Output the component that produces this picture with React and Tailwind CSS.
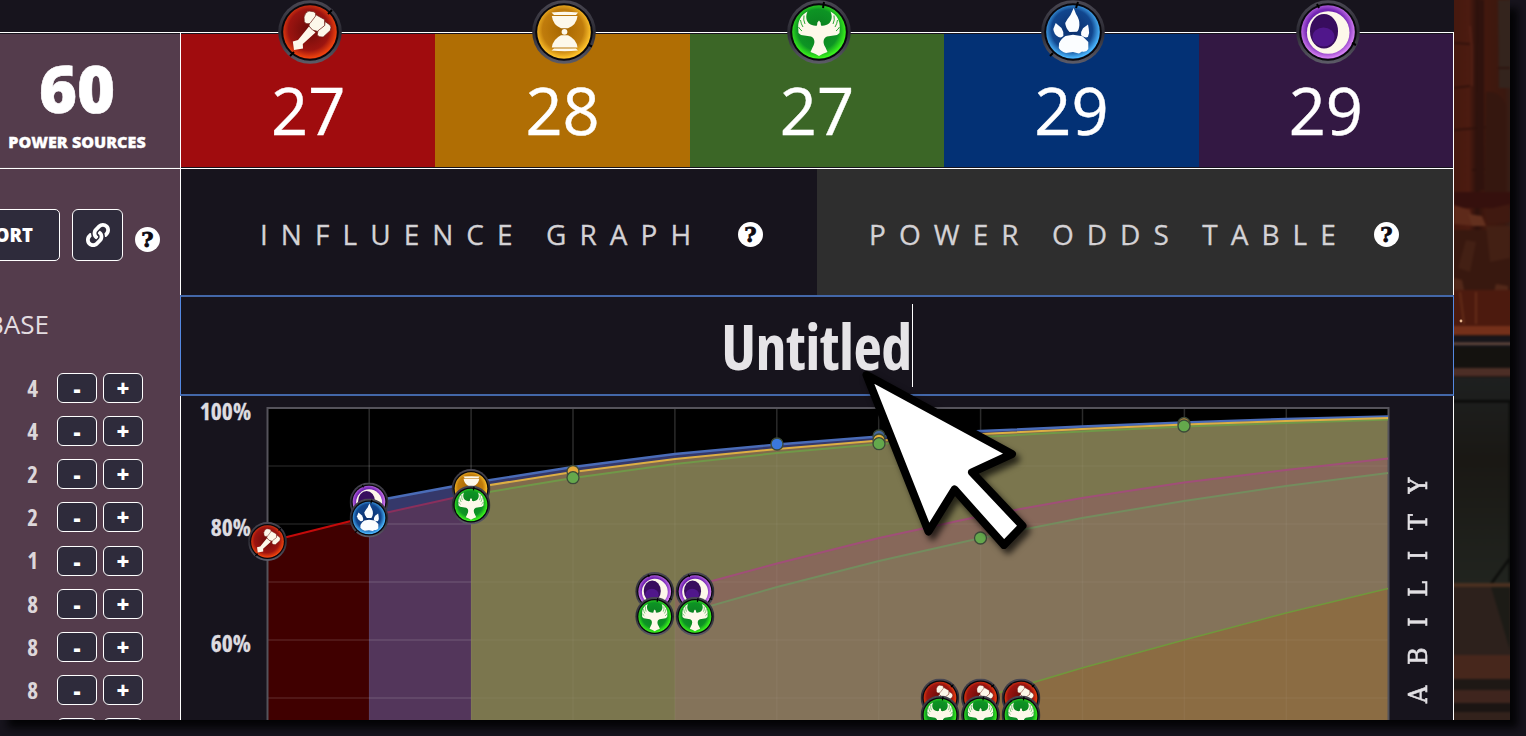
import React from "react";
import { FaLink } from "react-icons/fa";

const CREAM = "#fdf8ea";

function GemDefs() {
  const stops = {
    red: ["#6a0c0a", "#9c1410", "#f0440e"],
    gold: ["#a66600", "#c07c0c", "#ffc42c"],
    green: ["#0b7d20", "#0d9424", "#3cf41c"],
    blue: ["#0b2e6b", "#11468e", "#4cb8ff"],
    purple: ["#3c0a7a", "#7426b4", "#d884f4"],
  };
  return (
    <svg className="absolute h-0 w-0" aria-hidden="true">
      <defs>
        {Object.entries(stops).map(([k, [a, b, c]]) => (
          <radialGradient key={k} id={`gem-${k}`} cx="0.48" cy="0.46" r="0.56">
            <stop offset="0" stopColor={a} />
            <stop offset="0.68" stopColor={b} />
            <stop offset="0.94" stopColor={c} />
            <stop offset="1" stopColor={b} />
          </radialGradient>
        ))}
        <linearGradient id="gem-rim" x1="0" y1="0" x2="0" y2="1">
          <stop offset="0" stopColor="#4a4853" />
          <stop offset="0.5" stopColor="#2b2a33" />
          <stop offset="1" stopColor="#5d5c68" />
        </linearGradient>
      </defs>
    </svg>
  );
}

function Hammer() {
  return (
    <g>
      <path fill={CREAM} d="M31 26.5L37.500 32.500L24.800 44L25 48.500L16 50L14.800 41.500L20 40Z" />
      <g fill={CREAM} stroke="#6a1a14" strokeWidth="0.7">
        <path d="M31.500 22.500L37.500 14.500L46.500 19.500L47 25.500L40 31.500L34.500 30L31 26Z" />
        <path d="M26 17Q27.500 11.600 31 11L36 11.800Q38.300 13 37.600 16L32 23.400Q27.600 24.600 26.300 21.700Z" />
        <path d="M47 21.500L52 25Q53.800 26.800 52.300 30.500L45.200 37Q41 37.600 39.200 35L40 30.800L46.700 25.500Z" />
      </g>
    </g>
  );
}

function Hourglass() {
  return (
    <g fill={CREAM}>
      <path d="M19.5 12.5Q32.5 11 46 12.5L44 15H22Z" />
      <path d="M19.8 16H45.5Q44.5 25 36 28.3H29Q21 25 19.8 16Z" />
      <circle cx="32.5" cy="31.8" r="2.9" />
      <path d="M29 35.2H36Q44.5 39 45.5 47.5H19.8Q21 39 29 35.2Z" />
      <path d="M22 48.4H44L46 50.6Q32.5 52 19.5 50.6Z" />
    </g>
  );
}

function Phoenix() {
  return (
    <g>
      <path
        fill={CREAM}
        d="M20.5 11.5C14 15 11 21 11.2 27L11.5 33L14 35L24 36.500C28 38 28.5 43 25.5 47.5L23.5 52L28.5 54L32 56L35.5 54L40.5 52L38.5 47.5C35.5 43 36 38 40 36.500L50 35L52.5 33L52.8 27C53 21 50 15 43.5 11.5C45.5 16 45 20 42.5 23C40 25.500 36 26 34 25.5L33.6 22.5L32 20.5L30.4 22.5L30 25.5C28 26 24 25.500 21.5 23C19 20 18.5 16 20.5 11.5Z"
      />
      <path
        fill="none"
        stroke="#14a020"
        strokeWidth="0.9"
        d="M17 15.500Q16 20 18 24M13.500 20Q14 24 16 27M11.500 27Q12.500 29 15 31M47 15.500Q48 20 46 24M50.500 20Q50 24 48 27M52.500 27Q51.500 29 49 31"
      />
    </g>
  );
}

function Paw() {
  return (
    <g fill="#fbfdff">
      <path d="M32.700 8L35 14Q38.900 20 38.400 25Q38 30 36 31.800L28.500 32Q24.600 28 24.200 23Q27 18 29.500 15Z" />
      <path d="M14.700 23L20.500 28Q23 32 22.400 35.700Q20.500 38.300 17.500 37Q12.600 34 12.300 29Z" />
      <path d="M47 24.500L42 28.300Q39.400 32 40.100 35.300Q43.800 38.300 46.900 37Q48.900 33 47.800 29Z" />
      <path d="M18 43.500Q20 38.500 24.500 36L32 34.800L41.500 36.200L47.300 42V49Q45.500 52.500 41 51.500L38 53.500L32 52L25 53Q20 51.500 17.800 48Z" />
    </g>
  );
}

function Moon() {
  return (
    <g>
      <circle cx="32.200" cy="32.500" r="21.300" fill={CREAM} />
      <ellipse cx="28" cy="31.300" rx="14" ry="17.300" fill="#380d5e" />
      <ellipse cx="27.500" cy="37" rx="11" ry="9.500" fill="#6420b0" opacity="0.55" />
    </g>
  );
}

const GLYPHS = { red: Hammer, gold: Hourglass, green: Phoenix, blue: Paw, purple: Moon };
const NOTCHES = {
  red: "M50 14L54 10M16 52L12 56",
  gold: "M57 45L60 46.500",
  green: "M37 2L36 8",
  blue: "M37 2L35 8M12 53L9 56",
  purple: "M21 4L23 8M56 43L60 45",
};

function Gem({ kind, size = 64, x = 0, y = 0, className }) {
  const Glyph = GLYPHS[kind];
  return (
    <svg x={x} y={y} width={size} height={size} viewBox="0 0 64 64" className={className}>
      <circle cx="32" cy="32" r="31.800" fill="url(#gem-rim)" />
      <circle cx="32" cy="32" r="28.800" fill="#08070c" />
      <circle cx="32" cy="32" r="26.800" fill={`url(#gem-${kind})`} />
      <path d={NOTCHES[kind]} stroke="#000" strokeWidth="2" />
      <Glyph />
    </svg>
  );
}

function Help() {
  return (
    <span className="flex h-[25px] w-[25px] shrink-0 items-center justify-center rounded-full bg-white font-['DejaVu_Serif',serif] text-[21px] leading-[25px] font-bold tracking-normal text-[#0c0a10] [-webkit-text-stroke:0.8px_#0c0a10]">
      ?
    </span>
  );
}

const POWERS = [
  { kind: "red", value: 27, bg: "bg-[#a00c0e]" },
  { kind: "gold", value: 28, bg: "bg-[#b06e04]" },
  { kind: "green", value: 27, bg: "bg-[#3b6626]" },
  { kind: "blue", value: 29, bg: "bg-[#033175]" },
  { kind: "purple", value: 29, bg: "bg-[#331843]" },
];

function Stepper({ value }) {
  const btn =
    "flex h-[30px] w-10 items-center justify-center rounded-[6px] border border-white bg-[#2e2b3b] text-[22px] leading-none font-extrabold text-white";
  return (
    <div className="flex h-[43.150px] shrink-0 items-center">
      <span className="mr-[19px] w-[38px] text-right text-[23px] font-bold text-[#ddd7da] [font-stretch:75%]">{value}</span>
      <button className={btn}>-</button>
      <button className={`${btn} ml-1.5`}>+</button>
    </div>
  );
}

function Sidebar() {
  return (
    <aside className="flex w-[180px] shrink-0 flex-col overflow-hidden">
      <div className="flex h-[133px] flex-col items-center bg-[#543c4c] pr-[26px] pt-[24px] font-extrabold text-white">
        <span className="text-[65px] leading-[60px] [-webkit-text-stroke:0.6px_#fff]">60</span>
        <span className="mt-[12px] text-[16.100px] leading-6 whitespace-nowrap [-webkit-text-stroke:0.3px_#fff]">POWER SOURCES</span>
      </div>
      <div className="h-px bg-[#5a4652]" />
      <div className="h-px bg-white" />
      <div className="flex h-[551px] flex-col bg-[#543c4c] pt-10">
        <div className="flex h-[52px] shrink-0 items-center justify-end pr-5">
          <button className="flex h-[52px] w-[112px] shrink-0 items-center justify-end rounded-[5px] border border-white bg-[#2e2b3b] pr-[26px] text-[18.500px] font-extrabold text-white">
            EXPORT
          </button>
          <button className="ml-3 flex h-[52px] w-[51px] shrink-0 items-center justify-center rounded-[6px] border border-white bg-[#2e2b3b] text-white">
            <FaLink size={24} />
          </button>
          <span className="mt-2 ml-3">
            <Help />
          </span>
        </div>
        <div className="mt-[44px] flex h-[38px] w-[49px] shrink-0 items-center justify-end text-[26px] text-[#e3dde1]">BASE</div>
        <div className="mt-[23.500px] flex flex-col">
          {[4, 4, 2, 2, 1, 8, 8, 8, 8].map((n, i) => (
            <Stepper key={i} value={n} />
          ))}
        </div>
      </div>
    </aside>
  );
}

const BLUE = [[369, 502], [471, 483], [573, 467], [675, 454], [777, 444.500], [879, 436.500], [981, 431], [1082, 426.500], [1184, 422.500], [1286, 419], [1388, 416.500]];
const GOLD = [[471, 488], [573, 472], [675, 459], [777, 449], [879, 440.500], [981, 434], [1082, 429], [1184, 424.500], [1286, 421], [1388, 418]];
const GREEN = [[471, 495], [573, 478], [675, 464], [777, 453], [879, 444], [981, 437], [1082, 431.500], [1184, 426.500], [1286, 423], [1388, 419.500]];
const RED = [[267, 542], [369, 516.500], [471, 494]];
const PINK = [[675, 591], [777, 563.500], [879, 538], [981, 516], [1082, 498], [1184, 482.500], [1286, 470], [1388, 458.500]];
const SAGE = [[675, 616], [777, 587], [879, 561], [981, 538], [1082, 518], [1184, 501], [1286, 486], [1388, 473]];
const LIME = [[981, 698], [1082, 668], [1184, 640], [1286, 613], [1388, 588.500]];

const pts = (a) => a.map((p) => p.join(",")).join(" ");
const area = (a) => `${a[0][0]},720 ${pts(a)} ${a[a.length - 1][0]},720`;

const DOTS = [
  [573, 471.500, "#e2a83a"], [573, 477.700, "#64a84c"],
  [777, 444, "#3a78dc"],
  [879, 436, "#4468a0"], [879, 440, "#e2b03a"], [879, 443.700, "#64a84c"],
  [980.500, 538, "#64a84c"],
  [1184, 423.500, "#c08a3a"], [1184, 426, "#64a84c"],
];
const GEMS = [
  ["red", 267.500, 541.500],
  ["purple", 369, 502], ["blue", 369, 518],
  ["gold", 471, 488.500], ["green", 471, 505],
  ["purple", 654.700, 591.500], ["purple", 695, 591.500], ["green", 654.700, 616.500], ["green", 695, 616.500],
  ["red", 940, 698], ["red", 980.500, 698], ["red", 1021, 698],
  ["green", 940, 715], ["green", 980.500, 715], ["green", 1021, 715],
];

function Chart() {
  return (
    <svg className="block shrink-0 overflow-visible" width="1123" height="324" viewBox="267 396 1123 324">
      <rect x="267" y="408" width="1121" height="312" fill="#000" />
      <polygon points={area(BLUE)} fill="#35386a" />
      <polygon points={area(GOLD)} fill="#806a4c" />
      <polygon points={area(RED.slice(0, 2))} fill="#400000" />
      <polygon points={area(RED.slice(1))} fill="#53365b" />
      <polygon points={area(GREEN)} fill="#7b764e" />
      <polygon points={area(PINK)} fill="#87685a" />
      <polygon points={area(SAGE)} fill="#84735a" />
      <polygon points={area(LIME)} fill="#8b6c43" />
      <g stroke="#fff" strokeWidth="1.500">
        {[1, 2, 3, 4, 5, 6, 7, 8, 9, 10].map((i) => (
          <g key={i}>
            <line x1={267.300 + i * 101.900} x2={267.300 + i * 101.900} y1="408" y2={BLUE[i - 1][1]} strokeOpacity="0.17" />
            <line x1={267.300 + i * 101.900} x2={267.300 + i * 101.900} y1={BLUE[i - 1][1]} y2="720" strokeOpacity="0.04" />
          </g>
        ))}
        {[466, 524, 582, 640, 698].map((y) => (
          <g key={y}>
            <line x1="268" x2="471" y1={y} y2={y} strokeOpacity="0.12" />
            <line x1="471" x2="1388" y1={y} y2={y} strokeOpacity="0.04" />
          </g>
        ))}
        <line x1="471" x2="573" y1="466" y2="466" strokeOpacity="0.08" />
      </g>
      <path d="M267.500 720V408H1388.500V720" fill="none" stroke="#55535b" strokeWidth="2" />
      <g fill="none" strokeWidth="2">
        <polyline points={pts(RED.slice(0, 2))} stroke="#c40a0a" />
        <polyline points={pts(RED.slice(1))} stroke="#8a2f5c" />
        <polyline points={pts(BLUE)} stroke="#4a6cb8" strokeWidth="2.400" />
        <polyline points={pts(GREEN)} stroke="#709848" />
        <polyline points={pts(GOLD)} stroke="#dcae44" />
        <polyline points={pts(PINK)} stroke="#a04f78" />
        <polyline points={pts(SAGE)} stroke="#748c5e" />
        <polyline points={pts(LIME)} stroke="#70983c" strokeWidth="1.500" />
      </g>
      {DOTS.map(([x, y, c], i) => (
        <circle key={i} cx={x} cy={y} r="6" fill={c} stroke="#3c4a38" strokeWidth="1.300" />
      ))}
      {GEMS.map(([k, x, y], i) => (
        <Gem key={i} kind={k} size={39} x={x - 19.500} y={y - 19.500} />
      ))}
    </svg>
  );
}

function Backdrop() {
  return (
    <svg className="block h-[720px] w-14 shrink-0" viewBox="0 0 56 720">
      <defs>
        <linearGradient id="wall" x1="0" x2="1" y1="0" y2="0">
          <stop offset="0" stopColor="#44180f" />
          <stop offset="0.3" stopColor="#4c1b10" />
          <stop offset="0.42" stopColor="#2c110c" />
          <stop offset="0.55" stopColor="#42180e" />
          <stop offset="0.85" stopColor="#3a180f" />
          <stop offset="1" stopColor="#33211b" />
        </linearGradient>
        <linearGradient id="slab" x1="0" x2="0" y1="0" y2="1">
          <stop offset="0" stopColor="#1e2020" />
          <stop offset="0.4" stopColor="#1a1814" />
          <stop offset="1" stopColor="#21241f" />
        </linearGradient>
        <filter id="soft" x="-10%" y="-5%" width="120%" height="110%" colorInterpolationFilters="sRGB">
          <feGaussianBlur stdDeviation="1" />
        </filter>
      </defs>
      <rect width="56" height="720" fill="#2a1510" />
      <g filter="url(#soft)">
        <rect x="-4" y="-4" width="64" height="330" fill="url(#wall)" />
        <path d="M44 0H60V88H45Z" fill="#34241d" />
        <path d="M0 43L16 44M0 88L16 86M0 130L48 126M18 170L50 168M44 68H56" stroke="#2c100b" strokeWidth="1.500" />
        <path d="M32 92Q46 90 52 106V196H30Z" fill="#35170f" />
        <path d="M16 26L18 48V86" fill="none" stroke="#5a2418" strokeWidth="1.500" />
        <path d="M24 0H30V190H22Z" fill="#2f120d" />
        <path d="M0 192H60V208H0Z" fill="#35100d" />
        <path d="M0 205L16 210L20 226L0 224Z" fill="#5e2a1a" />
        <path d="M14 214L28 216L32 226L18 226Z" fill="#63301e" />
        <path d="M30 210L56 204V222L34 224Z" fill="#401910" />
        <path d="M-4 230H60V290H-4Z" fill="#38180f" />
        <path d="M12 240L22 242L16 272L4 268ZM32 226H56V258L36 262Z" fill="#432014" />
        <path d="M0 278L8 280L12 300H0ZM42 284L54 286V292H40Z" fill="#522819" />
        <rect x="-4" y="290" width="64" height="36" fill="#4c1a0e" />
        <path d="M6 292L10 324M22 292V324" stroke="#642c18" strokeWidth="2" />
        <rect x="-4" y="326" width="64" height="9" fill="#74301a" />
        <rect x="-4" y="336" width="64" height="11" fill="#17151a" />
        <rect x="-4" y="342.500" width="64" height="2.500" fill="#64483e" />
        <rect x="-4" y="347" width="64" height="21" fill="#14120f" />
        <rect x="-4" y="368" width="64" height="8" fill="#4c2e26" />
        <rect x="-4" y="377" width="64" height="207" fill="url(#slab)" />
        <rect x="-4" y="400" width="64" height="2.500" fill="#090a09" />
        <path d="M56 402V582M56 558L37 584" stroke="#0b0c0a" strokeWidth="2.500" />
        <rect x="-4" y="583" width="64" height="4" fill="#4a3020" />
        <rect x="-4" y="587" width="64" height="68" fill="#2d211c" />
        <path d="M37 587L56 650V587Z" fill="#1c1b16" />
        <rect x="-4" y="655" width="64" height="24" fill="#47271c" />
        <rect x="-4" y="679" width="64" height="11" fill="#1e1815" />
        <rect x="-4" y="690" width="64" height="13" fill="#3f251e" />
        <rect x="-4" y="703" width="64" height="9" fill="#1b1513" />
        <rect x="-4" y="712" width="64" height="12" fill="#33221c" />
      </g>
      <circle cx="7" cy="321" r="1.400" fill="#e8b890" />
    </svg>
  );
}

export default function App() {
  return (
    <div className="h-[736px] w-[1526px] overflow-hidden bg-[#17141d] font-['Open_Sans',sans-serif]">
      <GemDefs />
      <div className="h-[720px] w-[1510px] shadow-[8px_8px_8px_#040406]">
        <div className="relative flex h-[720px] w-[1510px] overflow-hidden bg-[#17141d]">
          <div className="flex w-[1454px] shrink-0 flex-col">
            <div className="h-8 shrink-0" />
            <div className="h-px shrink-0 bg-white" />
            <div className="flex h-[687px]">
              <div className="mt-px flex">
                <Sidebar />
              </div>
              <main className="flex w-[1274px] shrink-0 flex-col">
                <div className="flex h-[135px] shrink-0 border-x border-white pt-px">
                  {POWERS.map((p) => (
                    <div key={p.kind} className={`relative flex h-[133px] flex-1 justify-center pt-[32px] ${p.bg}`}>
                      <Gem kind={p.kind} className="absolute -top-[34px] left-[97px]" />
                      <span className="text-[65px] leading-[88px] text-white [-webkit-text-stroke:0.4px_#fff]">{p.value}</span>
                    </div>
                  ))}
                </div>
                <div className="h-px shrink-0 bg-white" />
                <div className="flex h-[126px] shrink-0 border-x border-white text-[28px] tracking-[13.050px] whitespace-nowrap text-[#d4d2d5] [-webkit-text-stroke:0.3px_#d4d2d5]">
                  <div className="flex w-[636px] shrink-0 items-center pt-1 pl-[79px]">
                    <span className="w-[478px] shrink-0">INFLUENCE GRAPH</span>
                    <Help />
                  </div>
                  <div className="flex w-[636px] shrink-0 items-center bg-[#2e2e2e] pt-1 pl-[52px]">
                    <span className="w-[505px] shrink-0">POWER ODDS TABLE</span>
                    <Help />
                  </div>
                </div>
                <div className="flex h-[101px] shrink-0 items-center justify-center border-x border-y-2 border-x-[#5488e0] border-y-[#4367a8]">
                  <span className="text-[62px] leading-[84px] font-bold tracking-[-0.500px] text-[#e6e4e7] [font-stretch:75%]">Untitled</span>
                  <span className="h-[83px] w-px bg-white" />
                </div>
                <div className="flex h-[324px] shrink-0 border-x border-white">
                  <div className="flex w-[86px] shrink-0 flex-col pr-4 text-right text-[23.500px] leading-[31px] font-bold text-[#dedce0] [-webkit-text-stroke:0.3px_#dedce0] [font-stretch:75%]">
                    <span className="h-[116px]">100%</span>
                    <span className="h-[116px]">80%</span>
                    <span>60%</span>
                  </div>
                  <Chart />
                  <div className="flex flex-1 items-start justify-center pt-[61px] pr-[7px]">
                    <span className="rotate-180 font-['DejaVu_Serif',serif] text-[26.500px] leading-[30px] tracking-[20.700px] text-[#e2e0e4] [-webkit-text-stroke:0.6px_#e2e0e4] [font-stretch:75%] [writing-mode:vertical-rl]">
                      ABILITY
                    </span>
                  </div>
                </div>
              </main>
            </div>
          </div>
          <Backdrop />
          <svg className="absolute top-[366px] left-[856px] drop-shadow-[4px_5px_3px_rgba(0,0,0,0.7)]" width="180" height="190" viewBox="856 366 180 190">
            <path
              d="M866.500 375L1012 454L972 472.300L1022.500 525.700L1004 545L954.500 489.500L928.500 531.500Z"
              fill="#fff"
              stroke="#000"
              strokeWidth="8"
              strokeLinejoin="round"
            />
          </svg>
        </div>
      </div>
    </div>
  );
}
